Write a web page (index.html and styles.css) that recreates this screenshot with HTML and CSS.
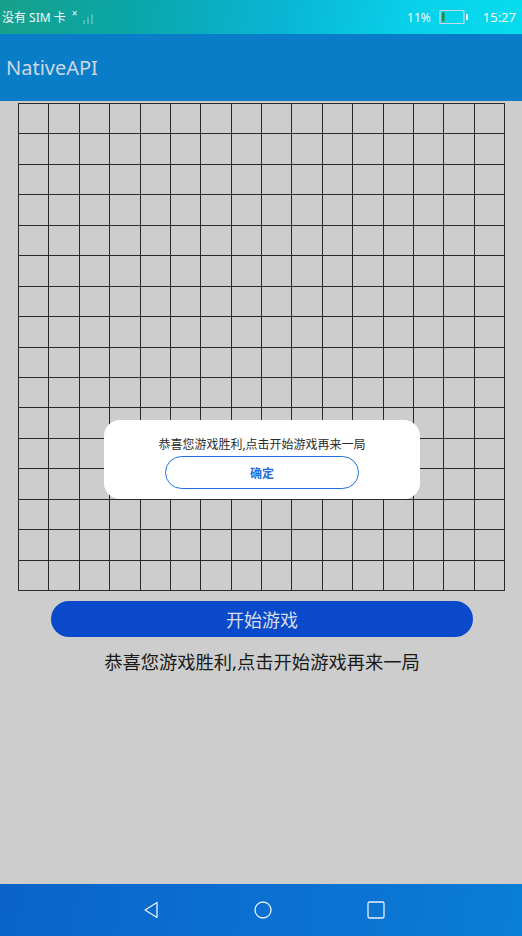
FILE: index.html
```html
<!DOCTYPE html>
<html lang="zh">
<head>
    <meta charset="UTF-8">
    <meta name="viewport" content="width=device-width, initial-scale=1.0">
    <title>NativeAPI</title>
    <link rel="stylesheet" href="styles.css">
</head>
<body>
<div class="phone">
    <div class="status-bar">
        <div class="status-left">
            <span>没有 SIM 卡</span>
            <span class="no-sim">×</span>
            <svg class="signal" width="14" height="12" viewBox="0 0 14 12">
                <rect x="1" y="8" width="2" height="4" fill="rgba(255,255,255,0.25)"/>
                <rect x="5" y="5" width="2" height="7" fill="rgba(255,255,255,0.25)"/>
                <rect x="9" y="2" width="2" height="10" fill="rgba(255,255,255,0.25)"/>
            </svg>
        </div>
        <div class="status-right">
            <span>11%</span>
            <svg class="battery" width="30" height="16" viewBox="0 0 30 16">
                <rect x="1" y="1.5" width="24" height="13" rx="1" fill="none" stroke="#c9d6f2" stroke-width="1.2"/>
                <rect x="3" y="3.5" width="2.5" height="9" fill="#1a8c4a"/>
                <rect x="27" y="5" width="2" height="6" fill="#f2f6fb"/>
            </svg>
            <span class="clock">15:27</span>
        </div>
    </div>

    <div class="app-bar">NativeAPI</div>

    <div class="content">
        <div class="board" id="board"></div>
        <button class="start-btn">开始游戏</button>
        <p class="result">恭喜您游戏胜利,点击开始游戏再来一局</p>

        <div class="dialog">
            <p class="dialog-text">恭喜您游戏胜利,点击开始游戏再来一局</p>
            <button class="dialog-btn">确定</button>
        </div>
    </div>

    <div class="nav-bar">
        <svg width="16" height="18" viewBox="0 0 16 18">
            <path d="M14 1.5 L2 9 L14 16.5 Z" fill="none" stroke="#e8f0fb" stroke-width="1.3" stroke-linejoin="round"/>
        </svg>
        <svg width="18" height="18" viewBox="0 0 18 18">
            <circle cx="9" cy="9" r="8" fill="none" stroke="#e8f0fb" stroke-width="1.3"/>
        </svg>
        <svg width="18" height="18" viewBox="0 0 18 18">
            <rect x="1" y="1" width="16" height="16" rx="1.5" fill="none" stroke="#e8f0fb" stroke-width="1.3"/>
        </svg>
    </div>
</div>

<script>
    const board = document.getElementById("board");
    for (let i = 0; i < 16 * 16; i++) {
        const cell = document.createElement("div");
        cell.classList.add("cell");
        board.appendChild(cell);
    }
</script>
</body>
</html>
```

FILE: styles.css
```css
* {
    box-sizing: border-box;
}

body {
    margin: 0;
    font-family: "Noto Sans", "Noto Sans CJK SC", sans-serif;
}

.phone {
    width: 522px;
    height: 936px;
    display: flex;
    flex-direction: column;
    overflow: hidden;
}

.status-bar {
    height: 34px;
    display: flex;
    justify-content: space-between;
    align-items: center;
    padding: 0 0 0 2px;
    color: #f4f8fb;
    font-size: 12px;
    background: linear-gradient(100deg, #16a08a 0%, #0aa6a8 25%, #0ab6d6 55%, #08d2ea 80%, #06dcee 100%);
}

.status-left {
    display: flex;
    align-items: center;
    gap: 4px;
}

.no-sim {
    font-size: 10px;
    margin-top: -8px;
    margin-left: 2px;
}

.signal {
    margin-top: 2px;
}

.status-right {
    display: flex;
    align-items: center;
    gap: 8px;
    padding-right: 6px;
}

.battery {
    margin-right: 6px;
}

.clock {
    font-size: 13px;
}

.app-bar {
    height: 67px;
    background-color: #0a7dc9;
    color: #cdd8e3;
    font-size: 20px;
    display: flex;
    align-items: center;
    padding-left: 6px;
    padding-bottom: 1px;
}

.content {
    flex: 1;
    background-color: #cdcdcd;
    position: relative;
    display: flex;
    flex-direction: column;
    align-items: center;
    padding-top: 2px;
}

.board {
    align-self: flex-start;
    width: 487px;
    height: 488px;
    margin-left: 18px;
    display: grid;
    grid-template-columns: repeat(16, 1fr);
    grid-template-rows: repeat(16, 1fr);
    border-left: 1px solid #2a2a2a;
    border-top: 1px solid #2a2a2a;
}

.cell {
    border-right: 1px solid #2a2a2a;
    border-bottom: 1px solid #2a2a2a;
}

.start-btn {
    width: 422px;
    height: 36px;
    margin-top: 10px;
    margin-left: 2px;
    border: none;
    border-radius: 18px;
    background-color: #0a49c9;
    color: #d6deee;
    font-family: inherit;
    font-size: 18px;
    cursor: pointer;
}

.result {
    margin: 12px 0 0 2px;
    font-size: 18.3px;
    line-height: 26px;
    color: #1a1a1a;
}

.dialog {
    position: absolute;
    left: 104px;
    top: 319px;
    width: 316px;
    height: 79px;
    background-color: #ffffff;
    border-radius: 16px;
    display: flex;
    flex-direction: column;
    align-items: center;
    padding-top: 17px;
}

.dialog-text {
    margin: 0;
    font-size: 12px;
    line-height: 16px;
    color: #2b2b2b;
}

.dialog-btn {
    margin-top: 3px;
    width: 194px;
    height: 33px;
    border: 1.5px solid #1f72e0;
    border-radius: 17px;
    background-color: #ffffff;
    color: #1f6edc;
    font-family: inherit;
    font-size: 12px;
    font-weight: bold;
}

.nav-bar {
    height: 52px;
    display: flex;
    justify-content: center;
    align-items: center;
    gap: 95px;
    padding-left: 5px;
    background: linear-gradient(100deg, #0a64c8 0%, #0a6ed0 40%, #0b74d2 70%, #0a7ed6 100%);
}
```
